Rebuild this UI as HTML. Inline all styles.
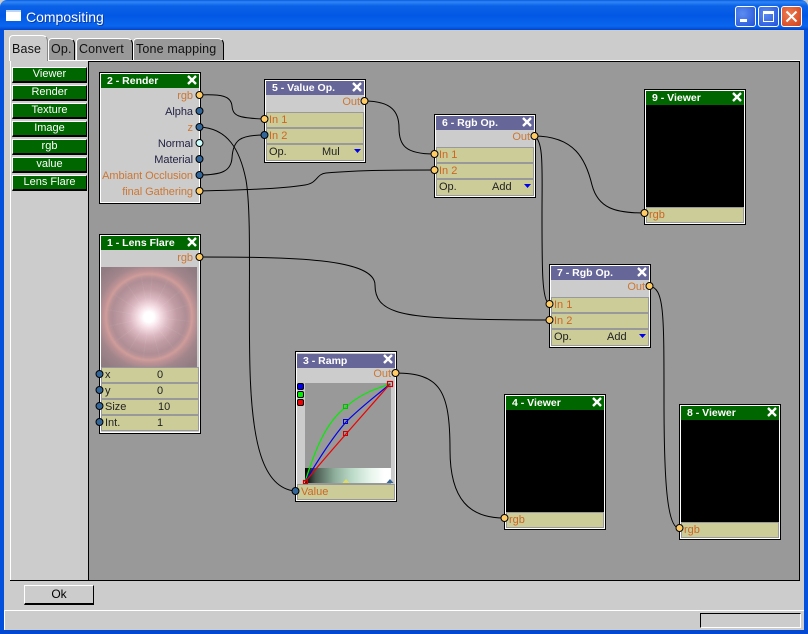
<!DOCTYPE html>
<html><head><meta charset="utf-8">
<style>
html,body{margin:0;padding:0;background:#ccc}
#w{position:relative;width:808px;height:634px;overflow:hidden;background:#ccc;font:11px "Liberation Sans",sans-serif;color:#000}
#w div{position:absolute;box-sizing:border-box;white-space:nowrap}
.tab{background:#999;border-top:1px solid #fff;border-left:1px solid #fff;border-right:1px solid #000;border-radius:4px 6px 0 0;font-size:12.500px;letter-spacing:.15px;padding:3px 0 0 2px;color:#111}
.b{left:12px;width:75px;height:16px;background:#006600;border-top:1px solid #fff;border-left:1px solid #fff;border-right:1px solid #000;border-bottom:2px solid #000;color:#fff;text-align:center;line-height:12px;font-size:11px}
.n{background:#ccc;border:1px solid #000;box-shadow:inset 1px 1px 0 #fff,inset -1px -1px 0 #fff;width:102px}
.t{left:1px;top:1px;width:98px;height:14px;color:#fff;font-weight:bold;font-size:10.500px;line-height:14px;padding-left:6px}
.g{background:#006600}.p{background:#666699}
.r{left:1px;width:98px;height:16px;line-height:14px;background:#cccc99;border:1px solid #999;padding-left:2px}
.o{color:#cc6622}.d{color:#222}
.l{right:7px;line-height:14px;color:#cc7733;text-align:right;letter-spacing:-.05px}
.v{left:1px;width:98px;background:#000}
</style></head><body><div id="w">

<!-- title bar -->
<div style="left:0;top:0;width:808px;height:30px;background:linear-gradient(#0a5ce0 0,#2f86f5 2px,#0b62e6 6px,#0258e4 16px,#0a66ee 26px,#0245cc 30px);border-radius:7px 7px 0 0"></div>
<div style="left:0;top:30px;width:4px;height:604px;background:#0350dc"></div>
<div style="left:804px;top:30px;width:4px;height:604px;background:#0350dc"></div>
<div style="left:0;top:630px;width:808px;height:4px;background:#0348d0"></div>
<div style="left:6px;top:10px;width:15px;height:11px;background:#fff;border-top:2px solid #bcd4fa"></div>
<div style="left:26px;top:9px;color:#fff;font-size:14px;line-height:16px;text-shadow:1px 1px 0 #0a3aa8">Compositing</div>
<div style="left:735px;top:6px;width:21px;height:21px;border:1px solid #fff;border-radius:3px;background:radial-gradient(circle at 35% 35%,#5c8cf0,#2252d8)"></div>
<div style="left:740px;top:19px;width:7px;height:3px;background:#fff"></div>
<div style="left:758px;top:6px;width:21px;height:21px;border:1px solid #fff;border-radius:3px;background:radial-gradient(circle at 35% 35%,#5c8cf0,#2252d8)"></div>
<div style="left:763px;top:11px;width:11px;height:11px;border:1px solid #fff;border-top:3px solid #fff"></div>
<div style="left:781px;top:6px;width:21px;height:21px;border:1px solid #fff;border-radius:3px;background:radial-gradient(circle at 35% 35%,#ee7a50,#d0401a)"></div>
<svg style="position:absolute;left:781px;top:6px" width="21" height="21"><path d="M5.500 5.500L15.500 15.500M15.500 5.500L5.500 15.500" stroke="#fff" stroke-width="2"/></svg>

<!-- tabs -->
<div style="left:10px;top:60px;width:790px;height:1px;background:#fff"></div>
<div class="tab" style="left:48px;top:38px;width:27px;height:22px">Op.</div>
<div class="tab" style="left:76px;top:38px;width:57px;height:22px">Convert</div>
<div class="tab" style="left:133px;top:38px;width:91px;height:22px">Tone mapping</div>
<div class="tab" style="left:9px;top:35px;width:39px;height:26px;background:#ccc;border-right:1px solid #888;padding-top:6px;z-index:2">Base</div>

<!-- panel -->
<div style="left:10px;top:61px;width:1px;height:520px;background:#fff"></div>
<div style="left:88px;top:61px;width:712px;height:520px;background:#999;border-left:1px solid #000;border-top:1px solid #000;border-right:1px solid #000;border-bottom:1px solid #000"></div>
<div style="left:10px;top:580px;width:79px;height:1px;background:#000"></div>

<div class="b" style="top:67px">Viewer</div>
<div class="b" style="top:85px">Render</div>
<div class="b" style="top:103px">Texture</div>
<div class="b" style="top:121px">Image</div>
<div class="b" style="top:139px">rgb</div>
<div class="b" style="top:157px">value</div>
<div class="b" style="top:175px">Lens Flare</div>

<!-- bottom -->
<div style="left:24px;top:585px;width:70px;height:20px;border-top:1px solid #fff;border-left:1px solid #fff;border-right:1px solid #000;border-bottom:2px solid #000;text-align:center;line-height:17px;font-size:12px">Ok</div>
<div style="left:4px;top:610px;width:800px;height:1px;background:#fff"></div>
<div style="left:4px;top:610px;width:1px;height:20px;background:#fff"></div>
<div style="left:700px;top:613px;width:101px;height:15px;border-top:1px solid #000;border-left:1px solid #000;border-right:1px solid #fff;border-bottom:1px solid #fff"></div>

<!-- 2 Render -->
<div class="n" style="left:99px;top:72px;height:132px">
 <div class="t g">2 - Render</div>
 <div class="l" style="top:16px">rgb</div>
 <div class="l" style="top:32px;color:#222244">Alpha</div>
 <div class="l" style="top:48px">z</div>
 <div class="l" style="top:64px;color:#222244">Normal</div>
 <div class="l" style="top:80px;color:#222244">Material</div>
 <div class="l" style="top:96px">Ambiant Occlusion</div>
 <div class="l" style="top:112px">final Gathering</div>
</div>
<!-- 5 Value -->
<div class="n" style="left:264px;top:79px;height:84px">
 <div class="t p">5 - Value Op.</div>
 <div class="l" style="top:15px;right:5px">Out</div>
 <div class="r o" style="top:32px">In 1</div>
 <div class="r o" style="top:48px">In 2</div>
 <div class="r d" style="top:64px;height:17px">Op.<div style="left:55px;top:0">Mul</div></div>
</div>
<!-- 6 Rgb -->
<div class="n" style="left:434px;top:114px;height:84px">
 <div class="t p">6 - Rgb Op.</div>
 <div class="l" style="top:15px;right:5px">Out</div>
 <div class="r o" style="top:32px">In 1</div>
 <div class="r o" style="top:48px">In 2</div>
 <div class="r d" style="top:64px;height:17px">Op.<div style="left:55px;top:0">Add</div></div>
</div>
<!-- 7 Rgb -->
<div class="n" style="left:549px;top:264px;height:84px">
 <div class="t p">7 - Rgb Op.</div>
 <div class="l" style="top:15px;right:5px">Out</div>
 <div class="r o" style="top:32px">In 1</div>
 <div class="r o" style="top:48px">In 2</div>
 <div class="r d" style="top:64px;height:17px">Op.<div style="left:55px;top:0">Add</div></div>
</div>
<!-- 9 Viewer -->
<div class="n" style="left:644px;top:89px;height:136px">
 <div class="t g">9 - Viewer</div>
 <div class="v" style="top:15px;height:102px"></div>
 <div class="r o" style="top:117px">rgb</div>
</div>
<!-- 4 Viewer -->
<div class="n" style="left:504px;top:394px;height:136px">
 <div class="t g">4 - Viewer</div>
 <div class="v" style="top:15px;height:102px"></div>
 <div class="r o" style="top:117px">rgb</div>
</div>
<!-- 8 Viewer -->
<div class="n" style="left:679px;top:404px;height:136px">
 <div class="t g">8 - Viewer</div>
 <div class="v" style="top:15px;height:102px"></div>
 <div class="r o" style="top:117px">rgb</div>
</div>
<!-- 1 Lens Flare -->
<div class="n" style="left:99px;top:234px;height:200px">
 <div class="t g">1 - Lens Flare</div>
 <div class="l" style="top:16px">rgb</div>
 <div style="left:1px;top:32px;width:96px;height:100px;background:radial-gradient(circle at 48px 50px,#fff 0,#fff 5px,#f6dfe6 11px,#dcb9c2 19px,#c09ba4 28px,#b08e96 37px,#b89296 40px,#cf9c9a 43px,#bd9294 46px,#a2868c 52px,#917c82 64px,#85747a 80px);overflow:hidden">
  <div style="left:0;top:0;width:96px;height:100px;background:repeating-conic-gradient(from 3deg at 48px 50px,rgba(255,255,255,.07) 0 2deg,transparent 2deg 23deg);-webkit-mask-image:radial-gradient(circle at 48px 50px,#000 0,#000 25px,transparent 50px);mask-image:radial-gradient(circle at 48px 50px,#000 0,#000 25px,transparent 50px)"></div>
 </div>
 <div class="r d" style="top:132px;padding-left:3px">x<div style="left:55px;top:0">0</div></div>
 <div class="r d" style="top:148px;padding-left:3px">y<div style="left:55px;top:0">0</div></div>
 <div class="r d" style="top:164px;padding-left:3px">Size<div style="left:56px;top:0">10</div></div>
 <div class="r d" style="top:180px;padding-left:3px">Int.<div style="left:55px;top:0">1</div></div>
</div>
<!-- 3 Ramp -->
<div class="n" style="left:295px;top:351px;height:151px">
 <div class="t p" style="top:2px">3 - Ramp</div>
 <div class="l" style="top:15px;right:5px">Out</div>
 <div style="left:9px;top:31px;width:86px;height:101px;background:#999"></div>
 <div style="left:9px;top:116px;width:86px;height:15px;background:linear-gradient(90deg,#000,#4a5a50 12%,#8fb09c 35%,#bcdac8 55%,#e4f4ea 75%,#fff 92%)"></div>
 <div class="r o" style="top:132px;height:16px;padding-left:3px">Value</div>
</div>

<!-- x icons, dropdown arrows, wires, ports -->
<svg style="position:absolute;left:0;top:0" width="808" height="634">
 <g stroke="#fff" stroke-width="2.400" fill="none">
  <path d="M188 76l8 8M196 76l-8 8"/>
  <path d="M353 83l8 8M361 83l-8 8"/>
  <path d="M523 118l8 8M531 118l-8 8"/>
  <path d="M638 268l8 8M646 268l-8 8"/>
  <path d="M733 93l8 8M741 93l-8 8"/>
  <path d="M593 398l8 8M601 398l-8 8"/>
  <path d="M768 408l8 8M776 408l-8 8"/>
  <path d="M188 238l8 8M196 238l-8 8"/>
  <path d="M384 355l8 8M392 355l-8 8"/>
 </g>
 <g fill="#0000ee">
  <path d="M354 149h7l-3.500 4z"/><path d="M524 184h7l-3.500 4z"/><path d="M639 334h7l-3.500 4z"/>
 </g>
 <!-- ramp -->
 <g fill="none" stroke-width="1.200">
  <path d="M305 482C315 450 326 422 346 407C360 394 375 389 390 384" stroke="#00ee00"/>
  <path d="M305 482C318 460 332 438 346 422C362 406 376 396 390 384" stroke="#0000ee"/>
  <path d="M305 482C318 466 332 450 346 434C362 416 376 400 390 384" stroke="#ee0000"/>
 </g>
 <g fill="none" stroke-width="1">
  <rect x="343.500" y="404.500" width="4" height="4" stroke="#00bb00"/>
  <rect x="343.500" y="419.500" width="4" height="4" stroke="#0000cc"/>
  <rect x="343.500" y="431.500" width="4" height="4" stroke="#cc0000"/>
  <rect x="387.500" y="381.500" width="5" height="5" stroke="#cc0000" stroke-width="1.200"/>
  <rect x="303.500" y="480.500" width="4" height="3" stroke="#cc0000" stroke-width="1.200"/>
 </g>
 <g stroke="#000" stroke-width="1">
  <rect x="297.500" y="383.500" width="6" height="6" rx="1.500" fill="#0000ee"/>
  <rect x="297.500" y="391.500" width="6" height="6" rx="1.500" fill="#00ee00"/>
  <rect x="297.500" y="399.500" width="6" height="6" rx="1.500" fill="#ee0000"/>
 </g>
 <path d="M342.500 483l3.500-4 3.500 4z" fill="#dddd66"/><path d="M386.500 483l3.500-4 3.500 4z" fill="#336699"/>

 <!-- wires -->
 <g fill="none" stroke="#000" stroke-width="1">
  <path d="M199 95C222 94 231 96 232 106C233 116 238 118 264 119"/>
  <path d="M199 127C228 128 240 150 246 180C252 215 248 300 250 370C252 440 262 488 295 491"/>
  <path d="M199 175C222 175 231 171 232 158C233 140 240 135 264 135"/>
  <path d="M199 191C240 190 280 189 305 185C318 183 316 174 326 173C360 170 400 170 434 170"/>
  <path d="M364 101C392 101 399 112 399 128C399 145 405 154 434 154"/>
  <path d="M534 136C575 136 586 160 592 185C598 208 615 213 644 213"/>
  <path d="M534 136C544 140 542 170 542 215C542 270 542 300 549 304"/>
  <path d="M199 257C290 257 375 258 375 285C375 312 400 317 470 319C500 320 530 320 549 320"/>
  <path d="M649 286C664 288 664 310 664 400C664 480 667 528 679 528"/>
  <path d="M395 373C440 373 450 390 450 450C450 500 470 518 504 518"/>
 </g>
 <!-- ports -->
 <g stroke="#000" stroke-width="1">
  <g fill="#ffcc66">
   <circle cx="199.500" cy="95" r="3.500"/><circle cx="199.500" cy="191" r="3.500"/><circle cx="199.500" cy="257" r="3.500"/>
   <circle cx="264.500" cy="119" r="3.500"/><circle cx="364.500" cy="101" r="3.500"/>
   <circle cx="434.500" cy="154" r="3.500"/><circle cx="434.500" cy="170" r="3.500"/><circle cx="534.500" cy="136" r="3.500"/>
   <circle cx="549.500" cy="304" r="3.500"/><circle cx="549.500" cy="320" r="3.500"/><circle cx="649.500" cy="286" r="3.500"/>
   <circle cx="644.500" cy="213" r="3.500"/><circle cx="504.500" cy="518" r="3.500"/><circle cx="679.500" cy="528" r="3.500"/>
   <circle cx="395.500" cy="373" r="3.500"/>
  </g>
  <g fill="#336699">
   <circle cx="199.500" cy="111" r="3.500"/><circle cx="199.500" cy="127" r="3.500"/><circle cx="199.500" cy="159" r="3.500"/><circle cx="199.500" cy="175" r="3.500"/>
   <circle cx="264.500" cy="135" r="3.500"/>
   <circle cx="99.500" cy="374" r="3.500"/><circle cx="99.500" cy="390" r="3.500"/><circle cx="99.500" cy="406" r="3.500"/><circle cx="99.500" cy="422" r="3.500"/>
   <circle cx="295.500" cy="491" r="3.500"/>
  </g>
  <circle cx="199.500" cy="143" r="3.500" fill="#ccffff"/>
 </g>
</svg>
</div></body></html>
